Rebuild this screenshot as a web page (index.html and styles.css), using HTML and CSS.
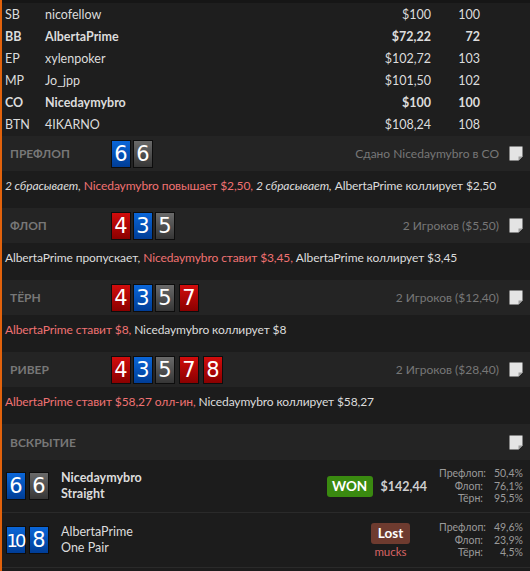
FILE: index.html
```html
<!DOCTYPE html>
<html lang="ru">
<head>
  <meta charset="UTF-8" />
  <title>Hand history</title>
  <link rel="stylesheet" href="styles.css">
</head>
<body>
  <div class="hand">

    <!-- Players -->
    <div class="players">
      <div class="prow"><span>SB</span><span>nicofellow</span><span class="num">$100</span><span class="num">100</span></div>
      <div class="prow hero"><span>BB</span><span>AlbertaPrime</span><span class="num">$72,22</span><span class="num">72</span></div>
      <div class="prow"><span>EP</span><span>xylenpoker</span><span class="num">$102,72</span><span class="num">103</span></div>
      <div class="prow"><span>MP</span><span>Jo_jpp</span><span class="num">$101,50</span><span class="num">102</span></div>
      <div class="prow hero"><span>CO</span><span>Nicedaymybro</span><span class="num">$100</span><span class="num">100</span></div>
      <div class="prow"><span>BTN</span><span>4IKARNO</span><span class="num">$108,24</span><span class="num">108</span></div>
    </div>

    <!-- Preflop -->
    <div class="street-head">
      <div class="street-name">ПРЕФЛОП</div>
      <div class="cards">
        <span class="card blue">6</span><span class="card grey">6</span>
      </div>
      <div class="street-info">Сдано Nicedaymybro в CO</div>
      <span class="note"><svg width="14" height="15" viewBox="0 0 14 15"><path d="M0.5 0.5h13v10l-4 4h-9z" fill="#e4e4e4"/><path d="M13.5 10.5l-4 4v-4z" fill="#9c9c9c"/></svg></span>
    </div>
    <div class="actions">
      <i>2 сбрасывает,</i> <span class="aggr">Nicedaymybro повышает $2,50,</span> <i>2 сбрасывает,</i> AlbertaPrime коллирует $2,50
    </div>

    <!-- Flop -->
    <div class="street-head">
      <div class="street-name">ФЛОП</div>
      <div class="cards">
        <span class="card red">4</span><span class="card blue">3</span><span class="card grey">5</span>
      </div>
      <div class="street-info">2 Игроков ($5,50)</div>
      <span class="note"><svg width="14" height="15" viewBox="0 0 14 15"><path d="M0.5 0.5h13v10l-4 4h-9z" fill="#e4e4e4"/><path d="M13.5 10.5l-4 4v-4z" fill="#9c9c9c"/></svg></span>
    </div>
    <div class="actions">
      AlbertaPrime пропускает, <span class="aggr">Nicedaymybro ставит $3,45,</span> AlbertaPrime коллирует $3,45
    </div>

    <!-- Turn -->
    <div class="street-head">
      <div class="street-name">ТЁРН</div>
      <div class="cards">
        <span class="card red">4</span><span class="card blue">3</span><span class="card grey">5</span><span class="card red next">7</span>
      </div>
      <div class="street-info">2 Игроков ($12,40)</div>
      <span class="note"><svg width="14" height="15" viewBox="0 0 14 15"><path d="M0.5 0.5h13v10l-4 4h-9z" fill="#e4e4e4"/><path d="M13.5 10.5l-4 4v-4z" fill="#9c9c9c"/></svg></span>
    </div>
    <div class="actions">
      <span class="aggr">AlbertaPrime ставит $8,</span> Nicedaymybro коллирует $8
    </div>

    <!-- River -->
    <div class="street-head">
      <div class="street-name">РИВЕР</div>
      <div class="cards">
        <span class="card red">4</span><span class="card blue">3</span><span class="card grey">5</span><span class="card red next">7</span><span class="card red next">8</span>
      </div>
      <div class="street-info">2 Игроков ($28,40)</div>
      <span class="note"><svg width="14" height="15" viewBox="0 0 14 15"><path d="M0.5 0.5h13v10l-4 4h-9z" fill="#e4e4e4"/><path d="M13.5 10.5l-4 4v-4z" fill="#9c9c9c"/></svg></span>
    </div>
    <div class="actions">
      <span class="aggr">AlbertaPrime ставит $58,27 олл-ин,</span> Nicedaymybro коллирует $58,27
    </div>

    <!-- Showdown -->
    <div class="street-head sd-head">
      <div class="street-name">ВСКРЫТИЕ</div>
      <div class="street-info"></div>
      <span class="note"><svg width="14" height="15" viewBox="0 0 14 15"><path d="M0.5 0.5h13v10l-4 4h-9z" fill="#e4e4e4"/><path d="M13.5 10.5l-4 4v-4z" fill="#9c9c9c"/></svg></span>
    </div>

    <div class="sd-row winner">
      <div class="cards">
        <span class="card blue">6</span><span class="card grey">6</span>
      </div>
      <div class="sd-name">Nicedaymybro<br />Straight</div>
      <div class="result">
        <span class="badge won">WON</span>
        <span class="amount">$142,44</span>
      </div>
      <div class="equity">
        <span>Префлоп:</span><span>50,4%</span>
        <span>Флоп:</span><span>76,1%</span>
        <span>Тёрн:</span><span>95,5%</span>
      </div>
    </div>

    <div class="sd-row">
      <div class="cards">
        <span class="card blue ten">10</span><span class="card blue">8</span>
      </div>
      <div class="sd-name">AlbertaPrime<br />One Pair</div>
      <div class="result lost-col">
        <span class="badge lost">Lost</span>
        <span class="mucks">mucks</span>
      </div>
      <div class="equity">
        <span>Префлоп:</span><span>49,6%</span>
        <span>Флоп:</span><span>23,9%</span>
        <span>Тёрн:</span><span>4,5%</span>
      </div>
    </div>

  </div>
</body>
</html>
```

FILE: styles.css
```css
body {
  margin: 0;
  background: #1c1c1c;
  font-family: Lato, 'Noto Sans', sans-serif;
  font-size: 12px;
  color: #dcdcdc;
}
.hand {
  border-left: 2px solid #e2620c;
  min-height: 571px;
  box-sizing: border-box;
}

/* players table */
.players {
  border-top: 3px solid #161616;
  background: #1e1e1e;
  padding-bottom: 1px;
}
.prow {
  display: grid;
  grid-template-columns: 40px 1fr 80px 49px 50px;
  padding-left: 3px;
  height: 22px;
  align-items: center;
  font-size: 12.5px;
}
.prow .num {
  text-align: right;
}
.prow.hero {
  font-weight: bold;
}

/* street header */
.street-head {
  display: flex;
  align-items: center;
  height: 35px;
  background: #242424;
  padding-left: 8px;
  padding-right: 7px;
}
.street-name {
  width: 101px;
  font-weight: bold;
  font-size: 12px;
  color: #777;
}
.street-info {
  margin-left: auto;
  color: #777;
  font-size: 12px;
}
.note {
  display: flex;
  margin-left: 10px;
}
.cards {
  display: flex;
  gap: 2px;
}
.card {
  display: flex;
  align-items: center;
  justify-content: center;
  width: 18px;
  height: 26px;
  border: 1px solid #0d0d0d;
  color: #fff;
  font-family: 'DejaVu Sans', sans-serif;
  font-size: 21px;
}
.card.next {
  margin-left: 2px;
}
.card.red {
  background: linear-gradient(#d20c0c, #8a0000);
}
.card.blue {
  background: linear-gradient(#0a66d8, #003d96);
}
.card.grey {
  background: linear-gradient(#6a6a6a, #363636);
}
.card.ten {
  letter-spacing: -3px;
  font-size: 18px;
  padding-right: 2px;
  box-sizing: content-box;
  width: 16px;
}

/* actions */
.actions {
  height: 37px;
  box-sizing: border-box;
  padding: 7px 0 0 3px;
  font-size: 12px;
  letter-spacing: -0.1px;
  white-space: nowrap;
}
.aggr {
  color: #f07272;
}

/* showdown */
.sd-head {
  height: 36px;
}
.sd-row {
  display: flex;
  align-items: center;
  height: 52px;
  border-bottom: 1px solid #2a2a2a;
  padding-left: 4px;
  padding-right: 7px;
}
.sd-row:last-child {
  height: 54px;
}
.sd-row .cards {
  gap: 3px;
}
.sd-name {
  margin-left: 12px;
  font-size: 12.5px;
  line-height: 16px;
}
.winner .sd-name {
  font-weight: bold;
}
.result {
  margin-left: auto;
  display: flex;
  align-items: center;
  gap: 8px;
}
.lost-col {
  flex-direction: column;
  gap: 1px;
  margin-right: 17px;
}
.badge {
  color: #fff;
  font-weight: bold;
  font-size: 13.5px;
  border-radius: 3px;
  height: 21px;
  line-height: 21px;
  text-align: center;
}
.won {
  background: #3a8a10;
  width: 46px;
}
.lost {
  background: #6e3b2f;
  width: 39px;
}
.amount {
  font-weight: bold;
  font-size: 12.5px;
  color: #cfcfcf;
}
.mucks {
  color: #d86464;
  font-size: 11.5px;
  line-height: 13px;
}
.equity {
  display: grid;
  grid-template-columns: 44px 40px;
  margin-left: 12px;
  font-size: 10.5px;
  line-height: 12.5px;
  color: #9a9a9a;
  text-align: right;
}
```
